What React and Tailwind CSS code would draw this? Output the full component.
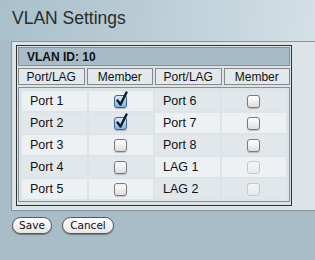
import React from 'react';

const rows = [
  ['Port 1', 'checked', 'Port 6', ''],
  ['Port 2', 'checked', 'Port 7', ''],
  ['Port 3', '', 'Port 8', ''],
  ['Port 4', '', 'LAG 1', 'disabled'],
  ['Port 5', '', 'LAG 2', 'disabled'],
];

const Box = ({ state }) => {
  if (state === 'checked') {
    return (
      <span className="relative block w-[13px] h-[13px] rounded-[3px] border border-[#3f6494] bg-[linear-gradient(#dcebfa,#7fb2e6)] shadow-[0_1px_1px_rgba(0,0,0,0.25)]">
        <svg className="absolute -top-[5px] left-[0px]" width="14" height="16" viewBox="0 0 14 16">
          <path d="M2.5 9.5 L5.5 13.5 L11.5 1.5" stroke="#141b26" strokeWidth="2.4" fill="none" strokeLinecap="round" strokeLinejoin="round" />
        </svg>
      </span>
    );
  }
  if (state === 'disabled') {
    return <span className="block w-[13px] h-[13px] rounded-[3px] border border-[#c2c8cc] bg-[linear-gradient(#f4f6f7,#e6eaec)]" />;
  }
  return (
    <span className="block w-[13px] h-[13px] rounded-[3px] border border-[#7a7a7a] bg-[linear-gradient(#ffffff,#dedede)] shadow-[0_1px_1px_rgba(0,0,0,0.2)]" />
  );
};

const Cell = ({ light, children, center }) => (
  <div
    className={`h-[20px] flex items-center ${center ? 'justify-center' : 'pl-[8px]'} ${
      light ? 'bg-[#edf1f3]' : 'bg-[#e1e7eb]'
    }`}
  >
    {children}
  </div>
);

export default function App() {
  return (
    <div className="w-[315px] h-[260px] overflow-hidden bg-[#a8bdc8] flex flex-col font-['Liberation_Sans',Arial,sans-serif] text-[#111]">
      <div className="h-[41px] pl-[12px] pt-[7px] bg-[linear-gradient(100deg,#a9c0cb_0%,#b9ccd5_45%,#d4e0e6_100%)]">
        <h1 className="text-[17.5px] leading-[22px] text-[#2b2b2b]">VLAN Settings</h1>
      </div>

      <div className="ml-[11px] h-[170px] border-t border-l border-b border-[#8497a1] bg-[#dce4e8] pl-[4px] pt-[3px]">
        <div className="w-[276px] border border-[#2f3336] p-[1px] flex flex-col gap-[2px] pb-[3px]">
          <div className="h-[19px] border border-[#878f95] bg-[#a8bcc8] flex items-center pl-[8px] text-[12px] font-bold">
            VLAN ID: 10
          </div>
          <div className="grid grid-cols-4 gap-[2px]">
            {['Port/LAG', 'Member', 'Port/LAG', 'Member'].map((h, i) => (
              <div
                key={i}
                className="h-[17px] border border-[#888] bg-[#e2e9ed] flex items-center justify-center text-[12px]"
              >
                {h}
              </div>
            ))}
          </div>
          <div className="border border-[#8a8f93] bg-[#dce4e8] px-[3px] pt-[3px] pb-[2px] flex flex-col gap-[2px]">
            {rows.map(([a, as, b, bs], i) => (
              <div key={i} className="grid grid-cols-4 gap-[2px] text-[12.5px]">
                <Cell light={i % 2 === 0}>{a}</Cell>
                <Cell light={i % 2 === 0} center>
                  <Box state={as} />
                </Cell>
                <Cell light={i % 2 === 1}>{b}</Cell>
                <Cell light={i % 2 === 1} center>
                  <Box state={bs} />
                </Cell>
              </div>
            ))}
          </div>
        </div>
      </div>

      <div className="flex gap-[10px] pl-[12px] pt-[6px] font-['DejaVu_Sans',sans-serif] text-[10.5px]">
        <button className="w-[40px] h-[17px] rounded-full border border-[#555] bg-[linear-gradient(#ffffff,#e6e6e6)] shadow-[0_1px_1px_rgba(0,0,0,0.35)] flex items-center justify-center">
          Save
        </button>
        <button className="w-[52px] h-[17px] rounded-full border border-[#555] bg-[linear-gradient(#ffffff,#e6e6e6)] shadow-[0_1px_1px_rgba(0,0,0,0.35)] flex items-center justify-center">
          Cancel
        </button>
      </div>
    </div>
  );
}
